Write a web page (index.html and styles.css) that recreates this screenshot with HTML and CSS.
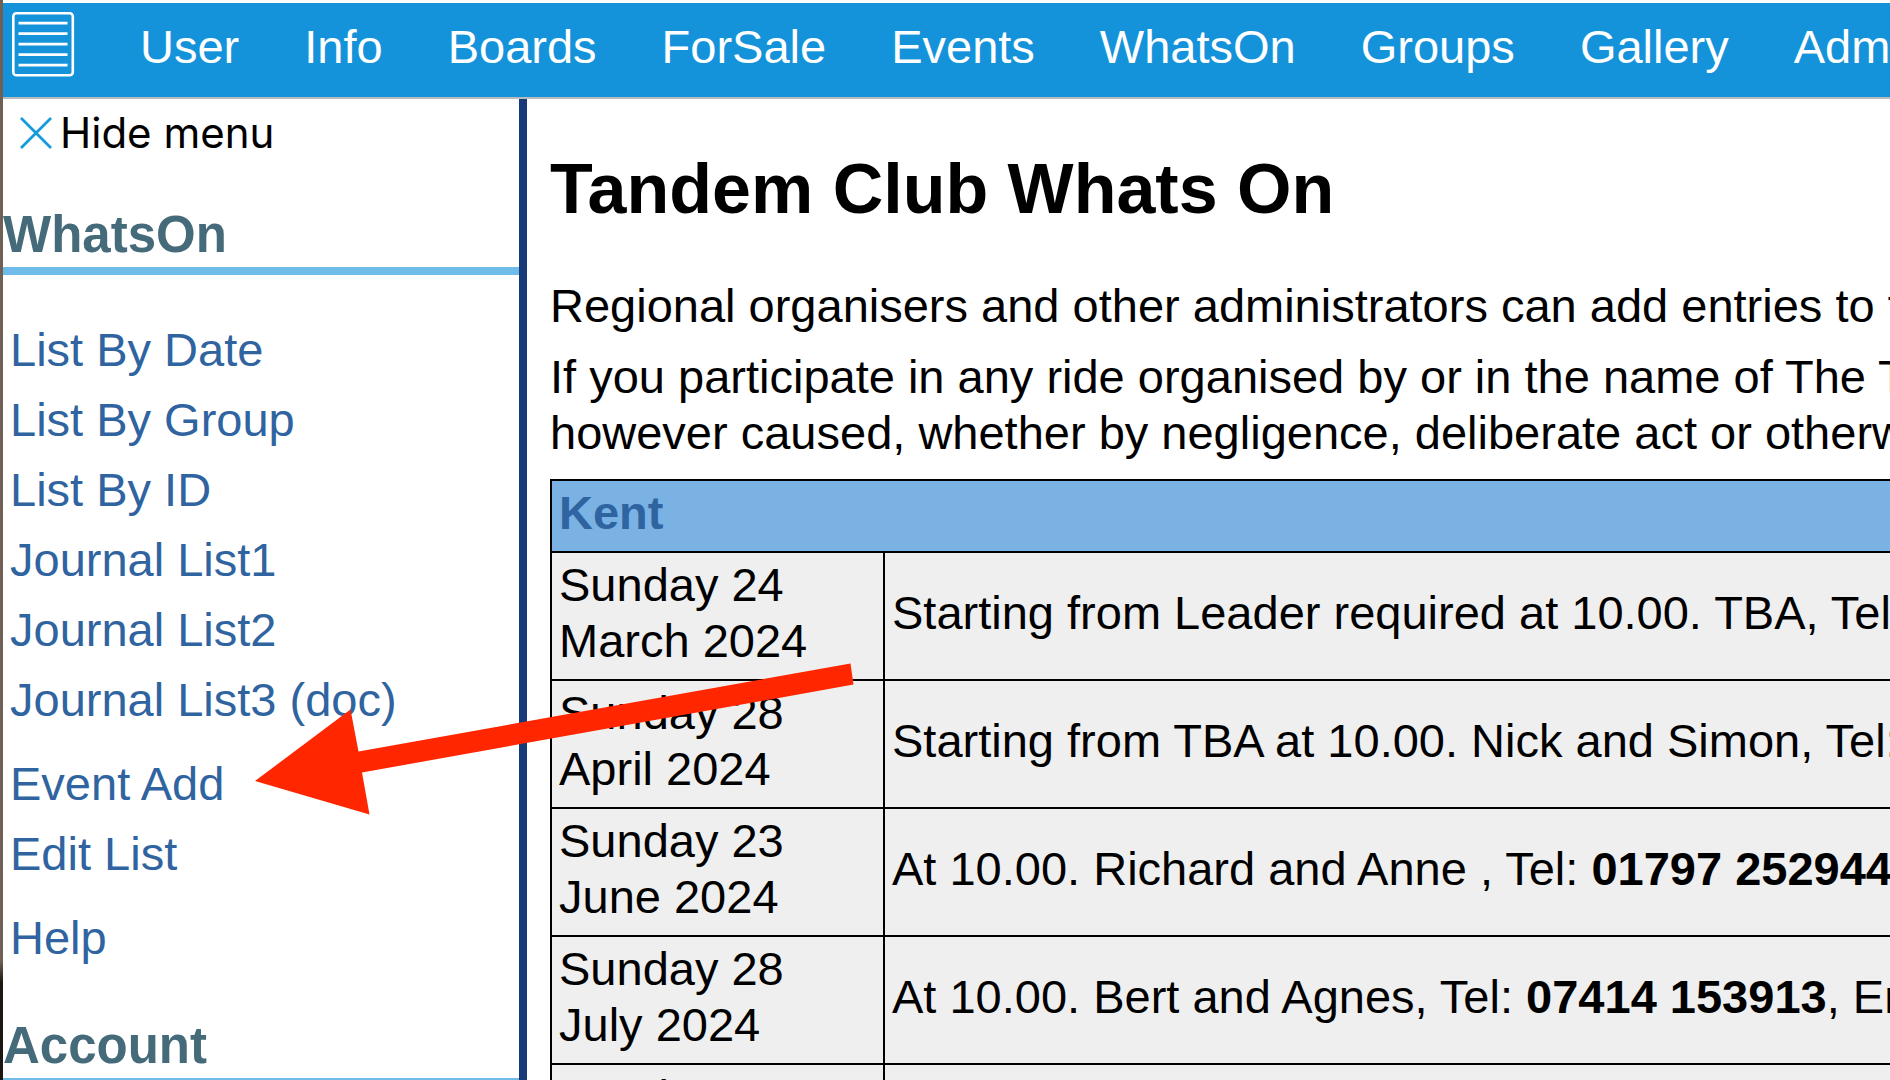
FILE: index.html
```html
<!DOCTYPE html>
<html lang="en">

<head>
    <meta charset="UTF-8">
    <meta name="viewport" content="width=device-width, initial-scale=1.0">
    <title>Tandem Club Whats On</title>
    <link rel="stylesheet" href="styles.css">
</head>

<body>
    <header class="topbar">
        <button class="menu-button" type="button" aria-label="Menu">
            <svg width="63" height="65" viewBox="0 0 63 65" fill="none" stroke="#fff">
                <rect x="1.3" y="1.3" width="59.5" height="62" rx="3" stroke-width="2.6" />
                <path d="M6.5 11.2h49M6.5 21.7h49M6.5 32.2h49M6.5 42.7h49M6.5 53.2h49" stroke-width="2.8" />
            </svg>
        </button>
        <nav class="topnav">
            <a href="#">User</a>
            <a href="#">Info</a>
            <a href="#">Boards</a>
            <a href="#">ForSale</a>
            <a href="#">Events</a>
            <a href="#">WhatsOn</a>
            <a href="#">Groups</a>
            <a href="#">Gallery</a>
            <a href="#">Admin</a>
        </nav>
    </header>

    <div class="page">
        <aside class="sidebar">
            <button class="hide-menu" type="button">
                <svg width="32" height="32" viewBox="0 0 32 32" fill="none" stroke="#149bdc" stroke-width="2.8">
                    <path d="M1 1l30 30M31 1L1 31" />
                </svg>
                Hide menu
            </button>

            <h2>WhatsOn</h2>
            <ul>
                <li><a href="#">List By Date</a></li>
                <li><a href="#">List By Group</a></li>
                <li><a href="#">List By ID</a></li>
                <li><a href="#">Journal List1</a></li>
                <li><a href="#">Journal List2</a></li>
                <li><a href="#">Journal List3 (doc)</a></li>
            </ul>
            <ul>
                <li><a href="#">Event Add</a></li>
                <li><a href="#">Edit List</a></li>
            </ul>
            <ul>
                <li><a href="#">Help</a></li>
            </ul>

            <h2>Account</h2>
        </aside>

        <main class="content">
            <h1>Tandem Club Whats On</h1>
            <p>Regional organisers and other administrators can add entries to this</p>
            <p>If you participate in any ride organised by or in the name of The Tandem<br>
                however caused, whether by negligence, deliberate act or otherwise</p>

            <table class="events">
                <tr>
                    <th colspan="2">Kent</th>
                </tr>
                <tr>
                    <td class="date">Sunday 24 March 2024</td>
                    <td>Starting from Leader required at 10.00. TBA, Tel:</td>
                </tr>
                <tr>
                    <td class="date">Sunday 28 April 2024</td>
                    <td>Starting from TBA at 10.00. Nick and Simon, Tel:</td>
                </tr>
                <tr>
                    <td class="date">Sunday 23 June 2024</td>
                    <td>At 10.00. Richard and Anne , Tel: <b>01797 252944</b></td>
                </tr>
                <tr>
                    <td class="date">Sunday 28 July 2024</td>
                    <td>At 10.00. Bert and Agnes, Tel: <b>07414 153913</b>, Email</td>
                </tr>
                <tr>
                    <td class="date">Sunday 22 September 2024</td>
                    <td></td>
                </tr>
            </table>
        </main>
    </div>

    <!-- arrow pointing at Event Add -->
    <svg class="arrow" width="600" height="152" viewBox="0 0 600 152">
        <polygon fill="#ff2600" points="0,118 95.5,46.5 103.5,88.5 595.5,0.5 598.5,21.5 107,109.5 114.5,151.5" />
    </svg>
</body>

</html>
```
FILE: styles.css
```css
* {
    box-sizing: border-box;
}

body {
    position: relative;
    display: flex;
    flex-direction: column;
    height: 100vh;
    margin: 0;
    padding: 3px 0 0 3px;
    overflow: hidden;
    font-family: "Liberation Sans", Arial, sans-serif;
    font-size: 47px;
    line-height: 56px;
    color: #000;
    background: linear-gradient(#6f5f54 89%, #1c1712 91%) left / 3px 100% no-repeat #fff;
}

a {
    color: #2f64a0;
    text-decoration: none;
}

button {
    padding: 0;
    border: none;
    color: #000;
    background: none;
    cursor: pointer;
}

svg {
    display: block;
}

.topbar {
    display: flex;
    align-items: flex-start;
    flex-shrink: 0;
    height: 96px;
    padding: 9px;
    border-bottom: 2px solid #b9bcbf;
    background: #1593da;
}

.topnav {
    display: flex;
    gap: 65px;
    margin: 7px 0 0 65px;
    white-space: nowrap;
}

.topnav a {
    color: #fff;
}

.page {
    display: flex;
    flex: 1;
    min-height: 0;
}

.sidebar {
    flex: 0 0 524px;
    border-right: 8px solid #173b79;
    overflow: hidden;
}

.hide-menu {
    display: flex;
    align-items: center;
    gap: 8px;
    margin: 6px 0 0 17px;
    padding-bottom: 8px;
    font-family: Inter, sans-serif;
    font-size: 42px;
    line-height: 56px;
}

.sidebar h2 {
    margin: 38px 0 47px;
    padding-bottom: 4px;
    border-bottom: 8px solid #70bce8;
    font-size: 51px;
    line-height: 56px;
    color: #456b7a;
}

.sidebar ul {
    margin: 0 0 14px;
    padding: 0 7px;
    list-style: none;
}

.sidebar li {
    padding-bottom: 14px;
}

.content {
    flex: 1;
    min-width: 0;
    padding: 50px 0 0 23px;
    overflow: hidden;
    white-space: nowrap;
}

.content h1 {
    margin: 0 0 49px;
    font-size: 70px;
    line-height: 80px;
}

.content p {
    margin: 0 0 15px;
}

.events {
    width: 110%;
    margin-top: 18px;
    border-collapse: collapse;
}

.events th,
.events td {
    padding: 4px 7px 10px;
    border: 2px solid #000;
    text-align: left;
}

.events th {
    color: #2f64a0;
    background: #7ab2e4;
}

.events td {
    background: #efefef;
}

.events .date {
    width: 333px;
    white-space: normal;
}

.arrow {
    position: absolute;
    top: 663px;
    left: 255px;
}
```
